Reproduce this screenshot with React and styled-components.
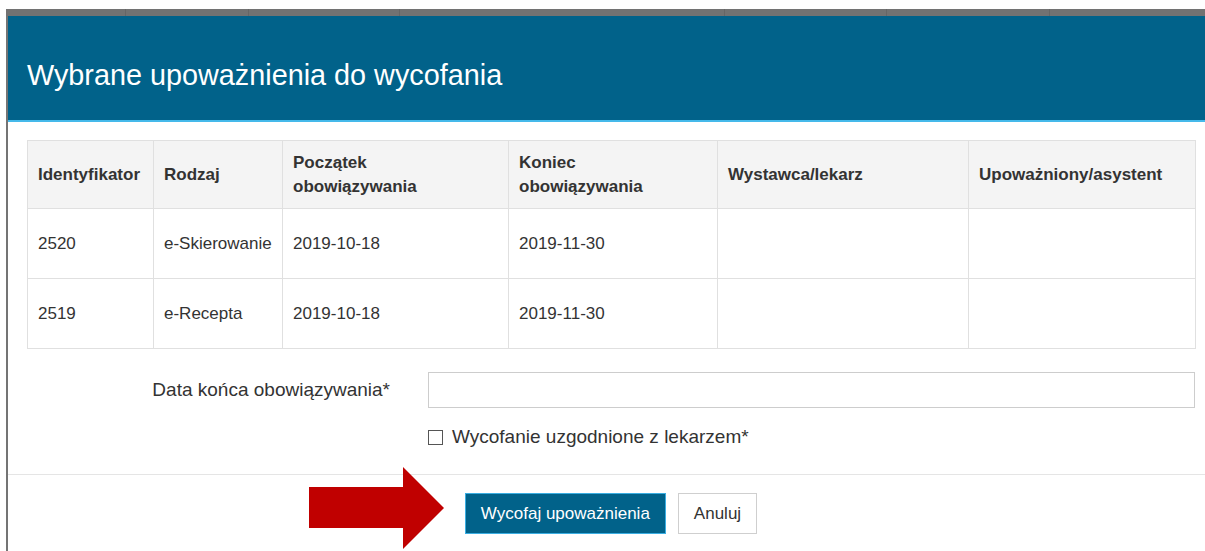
import React from 'react'
import styled, { createGlobalStyle } from 'styled-components'

const GlobalStyle = createGlobalStyle`
  html, body {
    margin: 0;
    padding: 0;
    overflow: hidden;
    background: #fff;
  }
  body {
    font-family: "Liberation Sans", Arial, sans-serif;
    color: #333;
  }
  * {
    box-sizing: border-box;
  }
`

const rows = [
  { id: '2520', kind: 'e-Skierowanie', from: '2019-10-18', to: '2019-11-30' },
  { id: '2519', kind: 'e-Recepta', from: '2019-10-18', to: '2019-11-30' }
]

const columns = [
  { label: 'Identyfikator', width: 126 },
  { label: 'Rodzaj', width: 129 },
  { label: ['Początek', 'obowiązywania'], width: 226 },
  { label: ['Koniec', 'obowiązywania'], width: 209 },
  { label: 'Wystawca/lekarz', width: 251 },
  { label: 'Upoważniony/asystent', width: 227 }
]

// column edges of the dimmed page behind the dialog
const dimCells = [120, 123, 151, 325, 162, 163, 200]

const App = () => {
  return (
    <React.Fragment>
      <GlobalStyle />
      <Screen>
        <Backdrop>
          <DimRow>
            {dimCells.map((w, i) => (
              <DimCell key={i} $width={w} />
            ))}
          </DimRow>

          <Modal>
            <Header>
              <Title>Wybrane upoważnienia do wycofania</Title>
            </Header>

            <Body>
              <Table>
                <colgroup>
                  {columns.map((c, i) => (
                    <col key={i} style={{ width: c.width }} />
                  ))}
                </colgroup>
                <thead>
                  <tr>
                    {columns.map((c, i) => (
                      <Th key={i}>
                        {Array.isArray(c.label) ? (
                          <>
                            {c.label[0]}
                            <br />
                            {c.label[1]}
                          </>
                        ) : c.label}
                      </Th>
                    ))}
                  </tr>
                </thead>
                <tbody>
                  {rows.map(row => (
                    <tr key={row.id}>
                      <Td>{row.id}</Td>
                      <Td>{row.kind}</Td>
                      <Td>{row.from}</Td>
                      <Td>{row.to}</Td>
                      <Td></Td>
                      <Td></Td>
                    </tr>
                  ))}
                </tbody>
              </Table>

              <FormRow>
                <Label>Data końca obowiązywania*</Label>
                <Input type="text" />
              </FormRow>

              <CheckRow>
                <CheckBox />
                Wycofanie uzgodnione z lekarzem*
              </CheckRow>
            </Body>

            <Footer>
              <Button $primary>Wycofaj upoważnienia</Button>
              <Button>Anuluj</Button>
            </Footer>
          </Modal>

          <Arrow width="136" height="83" viewBox="0 0 136 83">
            <polygon
              points="0,20 94,20 94,0 135,41 94,82 94,61 0,61"
              fill="#c00000"
            />
          </Arrow>
        </Backdrop>
      </Screen>
    </React.Fragment>
  )
}

const Screen = styled.div`
  height: 551px;
  padding-top: 9px;
  background: #fff;
`

const Backdrop = styled.div`
  position: relative;
  height: 542px;
  margin-left: 6px;
  background: #747474;
  overflow: hidden;
`

const DimRow = styled.div`
  display: flex;
  height: 7px;
  background: #727272;
`

const DimCell = styled.div`
  flex: 0 0 ${props => props.$width}px;
  border-right: 1px solid #666;
`

const Modal = styled.div`
  width: 1206px;
  margin-left: 2px;
  background: #fff;
`

const Header = styled.div`
  height: 106px;
  padding: 42px 19px 0;
  background: #01628a;
  border-bottom: 2px solid #45b9ea;
`

const Title = styled.h1`
  margin: 0;
  font-size: 28.8px;
  font-weight: normal;
  line-height: 34px;
  color: #fff;
`

const Body = styled.div`
  padding: 18px 19px 26px;
`

const Table = styled.table`
  width: 1168px;
  border-collapse: collapse;
  table-layout: fixed;
  font-size: 17px;
  line-height: 24px;
`

const Th = styled.th`
  height: 68px;
  padding: 0 10px;
  text-align: left;
  vertical-align: middle;
  font-weight: bold;
  background: #f4f4f4;
  border: 1px solid #e0e0e0;
  white-space: nowrap;
`

const Td = styled.td`
  height: 70px;
  padding: 0 10px;
  vertical-align: middle;
  border: 1px solid #e0e0e0;
  white-space: nowrap;
`

const FormRow = styled.div`
  display: grid;
  grid-template-columns: 363px 1fr;
  column-gap: 38px;
  align-items: center;
  margin-top: 23px;
`

const Label = styled.label`
  text-align: right;
  font-size: 19px;
`

const Input = styled.input`
  height: 36px;
  border: 1px solid #cdcdcd;
  border-radius: 0;
  outline: none;
  font-size: 17px;
`

const CheckRow = styled.div`
  display: flex;
  align-items: center;
  margin-top: 18px;
  padding-left: 401px;
  font-size: 19px;
  line-height: 22px;
`

const CheckBox = styled.span`
  width: 15px;
  height: 15px;
  margin-right: 9px;
  border: 1px solid #555;
  background: #fff;
`

const Footer = styled.div`
  display: flex;
  justify-content: center;
  gap: 12px;
  padding: 18px 19px 20px;
  border-top: 1px solid #e5e5e5;
`

const Button = styled.button`
  height: 41px;
  padding: 0 15px;
  font-family: "Liberation Sans", Arial, sans-serif;
  font-size: 17px;
  color: ${props => (props.$primary ? '#fff' : '#333')};
  background: ${props => (props.$primary ? '#01628a' : '#fff')};
  border: 1px solid ${props => (props.$primary ? '#3aaee2' : '#cfcfcf')};
  border-radius: 0;
`

const Arrow = styled.svg`
  position: absolute;
  left: 303px;
  top: 458px;
`

export default App
